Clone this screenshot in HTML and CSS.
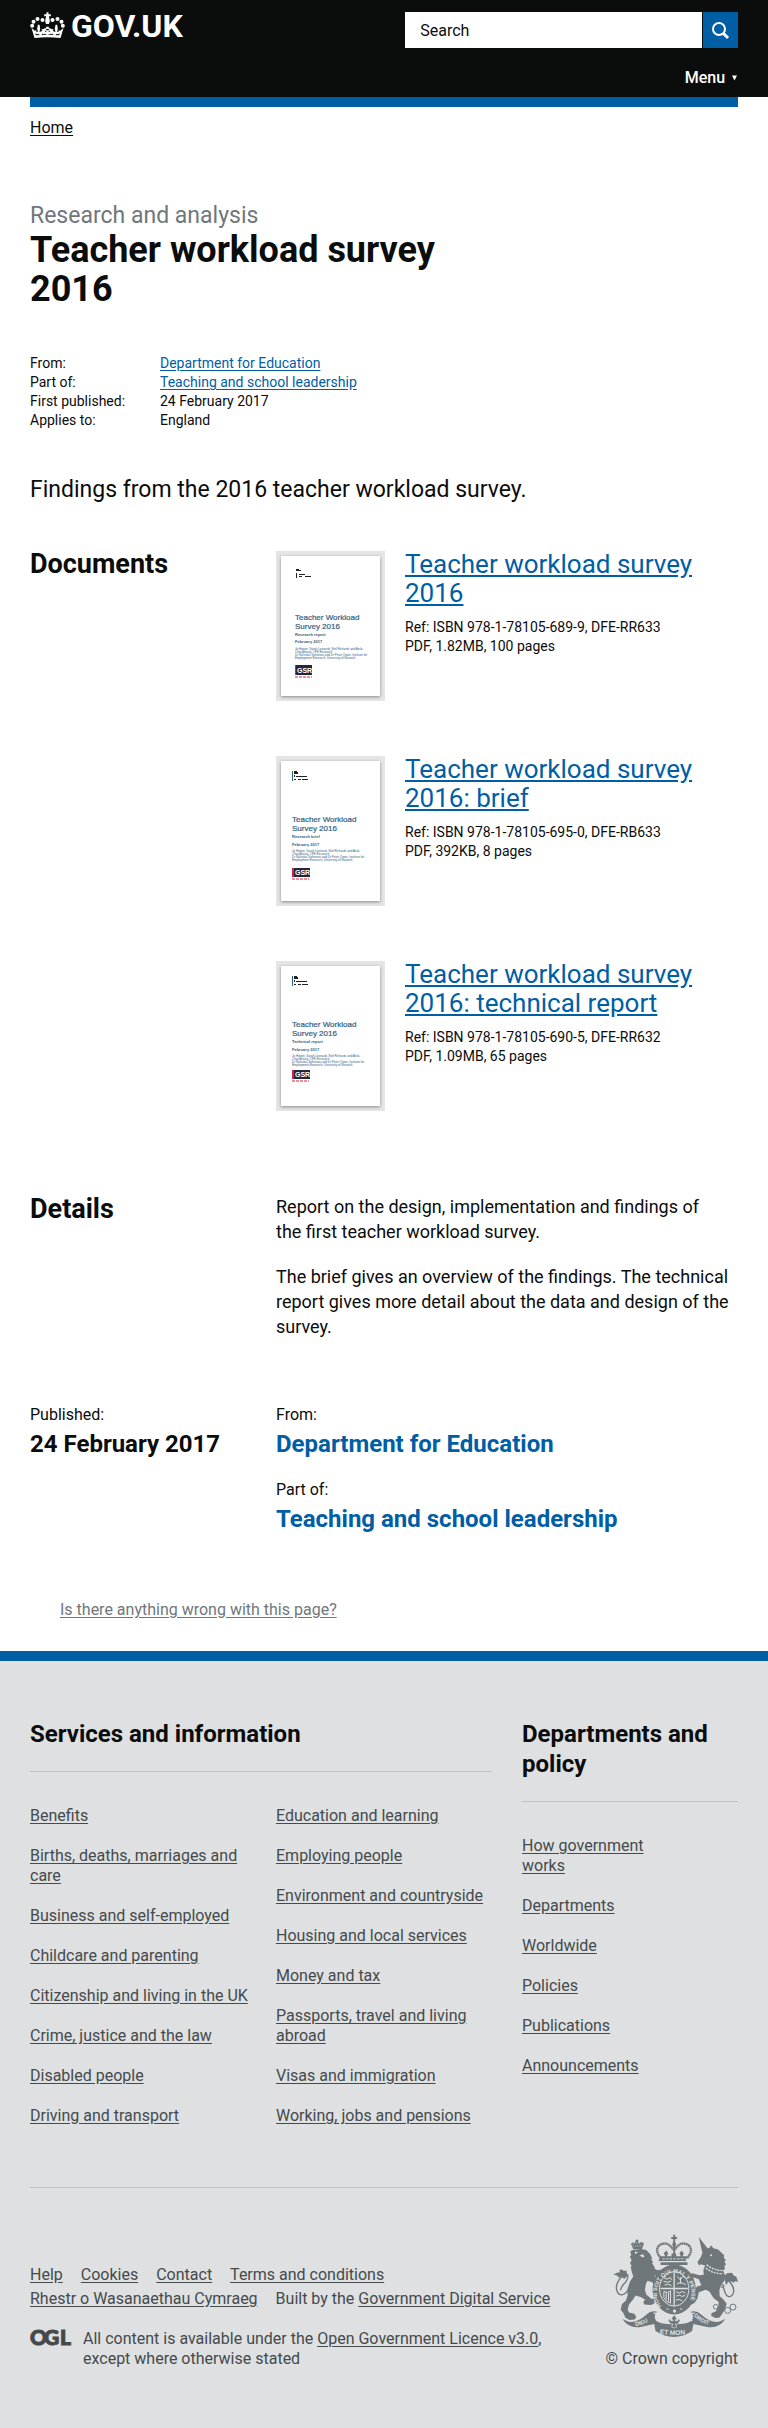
FILE: index.html
```html
<!DOCTYPE html>
<html lang="en">
<head>
<meta charset="utf-8">
<meta name="viewport" content="width=device-width, initial-scale=1">
<title>Teacher workload survey 2016 - GOV.UK</title>
<link rel="stylesheet" href="styles.css">
</head>
<body>
<header class="site-header">
  <div class="container header-inner">
    <a class="logo" href="#">
      <svg class="logo-crown" viewBox="92 36 104 78" fill="#fff" aria-hidden="true">
        <path d="M141 37h6v6h7v6h-6l2 8 1 8-3 7h-8l-3-7 1-8 2-8h-6v-6h7z"/>
        <circle cx="129" cy="60" r="6"/><circle cx="114" cy="57" r="6"/><circle cx="102" cy="65" r="6"/><circle cx="98" cy="77" r="6"/>
        <circle cx="159" cy="60" r="6"/><circle cx="174" cy="57" r="6"/><circle cx="186" cy="65" r="6"/><circle cx="190" cy="77" r="6"/>
        <path d="M96 84l10 8 4-1 1 5h4l-2-10 2-12h5l2 12-2 10 8-3-2-6 5 1 5-3h5l-2-5h10l-2 5h5l5 3 5-1-2 6 8 3-2-10 2-12h5l2 12-2 10h4l1-5 4 1 10-8-9 30q-39-5-78 0z"/>
        <path d="M107 100l5 3 6-1 4 3 6-4 6 2 5-6-4-5h6l-1-5h8l-1 5h6l-4 5 5 6 6-2 6 4 4-3 6 1 5-3-2 6q-37-4-70 0z" fill="#0b0c0c"/>
        <path d="M139 91h10l-2 5 5-1v8l-5-1 1 5h-8l1-5-5 1v-8l5 1zM121 96l8 3-3 7-7-1zM167 96l-8 3 3 7 7-1z"/>
      </svg>
      <span>GOV.UK</span>
    </a>
    <div class="header-tools">
      <form class="search" role="search">
        <input class="search-input" type="search" placeholder="Search" aria-label="Search">
        <button class="search-button" type="button" aria-label="Search">
          <svg viewBox="0 0 35 36" width="35" height="36" fill="none" stroke="#fff" aria-hidden="true"><circle cx="16" cy="17" r="6" stroke-width="2"/><path d="M20 21l5 5" stroke-width="3"/></svg>
        </button>
      </form>
      <button class="menu-button" type="button">Menu <svg class="menu-arrow" viewBox="0 0 6 6" aria-hidden="true"><path d="M0 0h6L3 6z" fill="#fff"/></svg></button>
    </div>
  </div>
</header>
<div class="container">
  <div class="brand-bar"></div>
  <nav class="breadcrumb" aria-label="Breadcrumb"><a href="#">Home</a></nav>
  <main>
    <div class="title-block">
      <p class="title-context">Research and analysis</p>
      <h1>Teacher workload survey 2016</h1>
    </div>
    <dl class="metadata">
      <dt>From:</dt><dd><a href="#">Department for Education</a></dd>
      <dt>Part of:</dt><dd><a href="#">Teaching and school leadership</a></dd>
      <dt>First published:</dt><dd>24 February 2017</dd>
      <dt>Applies to:</dt><dd>England</dd>
    </dl>
    <p class="summary">Findings from the 2016 teacher workload survey.</p>

    <section class="section">
      <h2 class="section-title">Documents</h2>
      <div class="section-body documents">
        <article class="document">
          <svg class="thumbnail" viewBox="0 0 99 140" role="img" aria-label="Report cover">
            <g fill="#222"><path d="M15 13h3v2h-3zM18 14h2v1h-2zM15 17h1v5h-1zM18 18h6v1h-6zM18 20h3v1h-3zM24 20h6v1h-6z"/></g>
            <g class="cover-text">
              <text class="cover-title" x="14" y="64">Teacher Workload</text><text class="cover-title" x="14" y="73">Survey 2016</text>
              <text class="cover-sub" x="14" y="80">Research report</text><text class="cover-sub" x="14" y="87">February 2017</text>
              <text x="14" y="94">Jo Higton, Sarah Leonardi, Neil Richards and Anila</text><text x="14" y="97">Choudhoury, CFE Research</text>
              <text x="14" y="100">Dr Nicholas Sofroniou and Dr Peter Owen, Institute for</text><text x="14" y="103">Employment Research, University of Warwick</text>
            </g>
            <rect x="14" y="109" width="17" height="10" fill="#26263b"/><rect x="14" y="109" width="1" height="10" fill="#d4213d"/>
            <text class="cover-logo" x="16" y="117">GSR</text><path d="M14 121h17" stroke="#d4213d" stroke-dasharray="3 1"/>
          </svg>
          <div>
            <h3><a href="#">Teacher workload survey 2016</a></h3>
            <p>Ref: ISBN 978-1-78105-689-9, DFE-RR633<br>PDF, 1.82MB, 100 pages</p>
          </div>
        </article>
        <article class="document">
          <svg class="thumbnail" viewBox="0 0 99 140" role="img" aria-label="Brief cover">
            <path d="M11 10h1v10h-1z" fill="#34638a"/><g fill="#222"><path d="M13 10h3v1h1v2h-4zM13 14h1v2h-1zM15 15h11v1H15zM13 18h2v1h-2zM17 18h3v1h-3zM21 18h6v1h-6z"/></g>
            <g class="cover-text">
              <text class="cover-title" x="11" y="61">Teacher Workload</text><text class="cover-title" x="11" y="70">Survey 2016</text>
              <text class="cover-sub" x="11" y="77">Research brief</text><text class="cover-sub" x="11" y="85">February 2017</text>
              <text x="11" y="91">Jo Higton, Sarah Leonardi, Neil Richards and Anila</text><text x="11" y="94">Choudhoury, CFE Research</text>
              <text x="11" y="97">Dr Nicholas Sofroniou and Dr Peter Owen, Institute for</text><text x="11" y="100">Employment Research, University of Warwick</text>
            </g>
            <rect x="11" y="107" width="18" height="9" fill="#26263b"/><rect x="11" y="107" width="2" height="9" fill="#d4213d"/>
            <text class="cover-logo" x="14" y="114">GSR</text><path d="M11 118h17" stroke="#d4213d" stroke-dasharray="3 1"/>
          </svg>
          <div>
            <h3><a href="#">Teacher workload survey 2016: brief</a></h3>
            <p>Ref: ISBN 978-1-78105-695-0, DFE-RB633<br>PDF, 392KB, 8 pages</p>
          </div>
        </article>
        <article class="document">
          <svg class="thumbnail" viewBox="0 0 99 140" role="img" aria-label="Technical report cover">
            <path d="M11 10h1v10h-1z" fill="#34638a"/><g fill="#222"><path d="M13 10h3v1h1v2h-4zM13 14h1v2h-1zM15 15h11v1H15zM13 18h2v1h-2zM17 18h3v1h-3zM21 18h6v1h-6z"/></g>
            <g class="cover-text">
              <text class="cover-title" x="11" y="61">Teacher Workload</text><text class="cover-title" x="11" y="70">Survey 2016</text>
              <text class="cover-sub" x="11" y="77">Technical report</text><text class="cover-sub" x="11" y="85">February 2017</text>
              <text x="11" y="91">Jo Higton, Sarah Leonardi, Neil Richards and Anila</text><text x="11" y="94">Choudhoury, CFE Research</text>
              <text x="11" y="97">Dr Nicholas Sofroniou and Dr Peter Owen, Institute for</text><text x="11" y="100">Employment Research, University of Warwick</text>
            </g>
            <rect x="11" y="104" width="18" height="9" fill="#26263b"/><rect x="11" y="104" width="2" height="9" fill="#d4213d"/>
            <text class="cover-logo" x="14" y="111">GSR</text><path d="M11 115h17" stroke="#d4213d" stroke-dasharray="3 1"/>
          </svg>
          <div>
            <h3><a href="#">Teacher workload survey 2016: technical report</a></h3>
            <p>Ref: ISBN 978-1-78105-690-5, DFE-RR632<br>PDF, 1.09MB, 65 pages</p>
          </div>
        </article>
      </div>
    </section>

    <section class="section details">
      <h2 class="section-title">Details</h2>
      <div class="section-body prose">
        <p>Report on the design, implementation and findings of the&nbsp;first teacher workload survey.</p>
        <p>The brief gives an overview of the findings. The technical report gives more detail about the data and design of the survey.</p>
      </div>
    </section>

    <section class="section published">
      <dl class="fact"><dt>Published:</dt><dd>24 February 2017</dd></dl>
      <dl class="fact section-body">
        <dt>From:</dt><dd><a href="#">Department for Education</a></dd>
        <dt>Part of:</dt><dd><a href="#">Teaching and school leadership</a></dd>
      </dl>
    </section>
    <p class="feedback"><a href="#">Is there anything wrong with this page?</a></p>
  </main>
</div>

<footer class="site-footer">
  <div class="container">
    <div class="footer-nav">
      <section class="services">
        <h2>Services and information</h2>
        <div class="services-lists">
          <ul>
            <li><a href="#">Benefits</a></li>
            <li><a href="#">Births, deaths, marriages and care</a></li>
            <li><a href="#">Business and self-employed</a></li>
            <li><a href="#">Childcare and parenting</a></li>
            <li class="one-line"><a href="#">Citizenship and living in the UK</a></li>
            <li><a href="#">Crime, justice and the law</a></li>
            <li><a href="#">Disabled people</a></li>
            <li><a href="#">Driving and transport</a></li>
          </ul>
          <ul>
            <li><a href="#">Education and learning</a></li>
            <li><a href="#">Employing people</a></li>
            <li><a href="#">Environment and countryside</a></li>
            <li><a href="#">Housing and local services</a></li>
            <li><a href="#">Money and tax</a></li>
            <li><a href="#">Passports, travel and living abroad</a></li>
            <li><a href="#">Visas and immigration</a></li>
            <li><a href="#">Working, jobs and pensions</a></li>
          </ul>
        </div>
      </section>
      <section>
        <h2>Departments and policy</h2>
        <ul class="policy-list">
          <li><a href="#">How government works</a></li>
          <li><a href="#">Departments</a></li>
          <li><a href="#">Worldwide</a></li>
          <li><a href="#">Policies</a></li>
          <li><a href="#">Publications</a></li>
          <li><a href="#">Announcements</a></li>
        </ul>
      </section>
    </div>
    <div class="footer-meta">
      <div>
        <ul class="meta-links">
          <li><a href="#">Help</a></li>
          <li><a href="#">Cookies</a></li>
          <li><a href="#">Contact</a></li>
          <li><a href="#">Terms and conditions</a></li>
          <li><a href="#">Rhestr o Wasanaethau Cymraeg</a></li>
          <li>Built by the <a href="#">Government Digital Service</a></li>
        </ul>
        <div class="licence">
          <svg class="ogl" viewBox="0 0 41 18" role="img" aria-label="Open Government Licence"><text x="0 14 30" y="16">OGL</text></svg>
          <p>All content is available under the <a href="#">Open Government Licence v3.0</a>, except where otherwise stated</p>
        </div>
      </div>
      <a class="copyright" href="#">
        <svg class="crest" viewBox="68 52 376 310" aria-hidden="true">
          <!-- lion -->
          <g fill="#6f777b">
            <path d="M122 82l5-6 5 4 5-9h5l4 9 7-5 8 5-6 18h-26zM137 69h7v6h-7z"/>
            <path d="M124 101l28-4 16 3 12 13 6 13-4 1 7 10-4 2 9 14-2 3 10 5 9-2-3 10 6 2-8 5 3 7-9-2-8-7 9 14-5 5 5 10-8 3-7-9-14-4-5 9-3 18 4 14 15 13 8 0 3 13-11 6-21-2-3-8 6-5-12-9-17-5-10 15-10 12-4 16 4 8 16 4 6 10-5 7-16 2-12-8-6-13-8-10 4-17 12-11 5-16-1-17 8-24 10-15-4-12-4-17 3-3-5-9 5-7-5-12 4-5-3-8z"/>
            <path d="M108 162l-8 1-5-4-8 1 2 7-9 2-11 5 13 4 1 5 8-2 12 6 8-9z"/>
          </g>
          <path d="M94 180q-20 23-15 40 4 19 20 14 14-7 22-29M112 173q3 17-13 31-6 8-9 17" fill="none" stroke="#6f777b" stroke-width="4"/>
          <path d="M148 116l10-3 5 7-6 3zM134 105l10 3-10 4z" fill="#dee0e2"/>
          <path d="M124 79h31M127 88h28" stroke="#dee0e2" stroke-width="2" stroke-dasharray="4 3"/>
          <!-- unicorn -->
          <g fill="#6f777b">
            <path d="M326 61l27 35 6-3 4-7 7 9 14 4 9 8 10 10-2 6 7 8-5 4 5 9-5 4 2 8-6 6 7 16-3 15-10 12-5 16 1 18 10 9 11 14-6 19-8 12-8 11-12 1-13-7 2-8 12-5 8-15 1-13-15-12-13-20-11-5-21 7-4 19-9 14-16 7-4-7 13-10 4-27 11-13 13-4-8-18-14-5-16 4-9-10-9 6-3-12 10-4 7 8 15-5 20 6 14-1-1-15 5-13-13-4-5 4-5-10 10-15 5-13z"/>
            <path d="M402 180l9-10 15-1 5 8 8 4 5 15-9-2-4 5-8-5-8 2-7 10z"/>
          </g>
          <path d="M416 177q-6 10 7 24 15 21 3 36-13 9-20-7l-8-24" fill="none" stroke="#6f777b" stroke-width="4"/>
          <path d="M350 145q22 17 48 17M347 155q26 18 52 16" fill="none" stroke="#dee0e2" stroke-width="4" stroke-dasharray="6 3"/>
          <circle cx="363" cy="116" r="3" fill="#dee0e2"/>
          <g fill="none" stroke="#6f777b" stroke-width="3"><circle cx="377" cy="271" r="7"/><circle cx="390" cy="287" r="6"/><circle cx="413" cy="282" r="9"/><circle cx="429" cy="272" r="9"/><circle cx="397" cy="208" r="5"/><circle cx="396" cy="270" r="8"/></g>
          <!-- crown -->
          <path d="M212 125q-23-28 0-42 22-9 37 16M291 125q23-28 0-42-22-9-37 16" fill="none" stroke="#6f777b" stroke-width="7" stroke-dasharray="5 1"/>
          <path d="M249 54h6v7h6v6h-6v9l3 7-3 9v27h-6V92l-3-9 3-7v-9h-6v-6h6zM211 119h14l-4-9 7-8 6 8-4 9h14v-8h14v8h14l-4-9 6-8 7 8-4 9h14l-4 14h-82zM211 137h81v8h-81z" fill="#6f777b"/>
          <path d="M217 127h69" stroke="#dee0e2" stroke-width="3" stroke-dasharray="7 4"/>
          <!-- garter and shield -->
          <ellipse cx="252" cy="219" rx="65" ry="75" fill="#6f777b"/>
          <ellipse cx="252" cy="217" rx="44" ry="52" fill="#6f777b" stroke="#dee0e2" stroke-width="3"/>
          <path id="garter" d="M213 269A52 60 0 1 1 291 269" fill="none"/>
          <text class="crest-text"><textPath href="#garter">HONI SOIT QUI MAL Y PENSE</textPath></text>
          <path d="M252 168v100M211 216h82" stroke="#dee0e2" stroke-width="4"/>
          <path d="M221 184l10 4 9-5 5 7M220 195l12 2 11-3M223 206l9-3 12 4M258 226l9 4 10-5 9 5M258 239l11-3 6 4 10-3M257 251l10-2 9 4M262 180l8 10 9-11 8 6M260 202l11-4 16 6M271 182v20M221 225v18q5 14 20 17V223q-7 9-20 2M228 228v21M235 228v27" fill="none" stroke="#dee0e2" stroke-width="3"/>
          <path d="M229 278h6M249 284l4-5 4 5-4 5zM270 278h6" stroke="#dee0e2" stroke-width="3" fill="#dee0e2"/>
          <!-- motto ribbon -->
          <path d="M108 313q25 13 61-19 13-13 32-8-12 11-5 24 9 14 55 14t55-14q7-13-5-24 19-5 32 8 36 32 61 19l12-5q-21 31-58 23l-38-8-4 21q-27 18-55 18t-55-18l-4-21-38 8q-37 8-58-23z" fill="#6f777b"/>
          <path d="M190 290q20 0 23 12 2 12-16 10M314 290q-20 0-23 12-2 12 16 10" fill="none" stroke="#dee0e2" stroke-width="4"/>
          <path d="M252 295l8 11-5 7h7l3-7 5 7-7 10h-8l5 9-8 3-8-3 5-9h-8l-7-10 5-7 3 7h7l-5-7z" fill="#6f777b" stroke="#dee0e2" stroke-width="2"/>
          <path id="motto-left" d="M136 329q29-3 58-29" fill="none"/><path id="motto-mid" d="M208 352q44 8 92 0" fill="none"/><path id="motto-right" d="M310 299q27 26 62 30" fill="none"/>
          <text class="crest-text"><textPath href="#motto-left">DIEU</textPath></text>
          <text class="crest-text crest-motto"><textPath href="#motto-mid">ET MON</textPath></text>
          <text class="crest-text"><textPath href="#motto-right">DROIT</textPath></text>
        </svg>
        <span>© Crown copyright</span>
      </a>
    </div>
  </div>
</footer>
</body>
</html>
```

FILE: styles.css
```css
* { box-sizing: border-box; }
body {
  margin: 0;
  background: #fff;
  color: #0b0c0c;
  font: 16px/20px Roboto, "Liberation Sans", sans-serif;
}
h1, h2, h3, p, dl, dd, ul { margin: 0; padding: 0; }
ul { list-style: none; }
a { color: #005ea5; text-underline-offset: 2px; }
.container { max-width: 1020px; margin: 0 auto; padding: 0 30px; }

.site-header { background: #0b0c0c; }
.header-inner { display: flex; justify-content: space-between; padding-top: 12px; padding-bottom: 9px; }
.logo {
  display: flex;
  align-items: flex-start;
  gap: 6px;
  color: #fff;
  font-size: 32px;
  line-height: 28px;
  font-weight: 700;
  text-decoration: none;
}
.logo-crown { width: 35px; height: 26px; }
.header-tools { display: flex; flex-direction: column; align-items: flex-end; gap: 20px; width: 47%; }
.search { display: flex; gap: 1px; width: 100%; }
.search-input {
  flex: 1;
  min-width: 0;
  height: 36px;
  padding: 0 15px;
  border: 0;
  border-radius: 0;
  background: #fff;
  color: #0b0c0c;
  font: inherit;
  appearance: none;
}
.search-input::placeholder { color: #0b0c0c; opacity: 1; }
.search-button { width: 35px; height: 36px; padding: 0; border: 0; background: #005ea5; }
.search-button svg { display: block; }
.menu-button {
  padding: 0 1px;
  border: 0;
  background: none;
  color: #fff;
  font: 500 16px/20px Roboto, sans-serif;
}
.menu-arrow { width: 5px; height: 6px; margin-left: 3px; vertical-align: 2px; }

.brand-bar { height: 10px; background: #005ea5; }
.breadcrumb { padding-top: 11px; }
.breadcrumb a { color: #0b0c0c; }
.title-block { max-width: 462px; margin-top: 62px; }
.title-context { color: #6f777b; font-size: 23px; line-height: 31px; }
h1 { font-size: 36px; line-height: 39px; }
.metadata {
  display: grid;
  grid-template-columns: 130px 1fr;
  margin-top: 45px;
  font-size: 14px;
  line-height: 19px;
}
.summary { margin-top: 45px; font-size: 23px; line-height: 30px; }

.section { display: grid; grid-template-columns: repeat(3, 1fr); column-gap: 30px; margin-top: 43px; }
.section-title { font-size: 27px; line-height: 32px; }
.section-body { grid-column: 2 / 4; }
.documents { display: flex; flex-direction: column; gap: 52px; }
.document { display: flex; gap: 20px; align-items: flex-start; }
.thumbnail {
  flex: none;
  width: 99px;
  height: 140px;
  margin: 8px 5px 5px;
  background: #fff;
  box-shadow: 0 1px 3px #888, 0 0 0 5px #e5e5e5;
}
.document h3 { margin-top: 2px; font-size: 26px; line-height: 29px; font-weight: 400; }
.document p { margin-top: 10px; font-size: 14px; line-height: 19px; }
.cover-text { fill: #31617f; font: 3px "Liberation Sans", sans-serif; }
.cover-title { font-size: 8px; stroke: #31617f; stroke-width: 0.2px; }
.cover-sub { font-size: 4px; font-weight: 700; }
.cover-logo { fill: #fff; font: 700 7px "Liberation Sans", sans-serif; }

.details { margin-top: 82px; }
.prose { display: flex; flex-direction: column; gap: 20px; padding-top: 1px; font-size: 18px; line-height: 25px; }
.published { margin-top: 66px; }
.fact dd { margin: 4px 0 21px; font-size: 24px; line-height: 30px; font-weight: 700; }
.fact dd:last-child { margin-bottom: 0; }
.fact a { text-decoration: none; }
.feedback { padding: 66px 30px 31px; }
.feedback a { color: #6f777b; }

.site-footer { border-top: 10px solid #005ea5; background: #dee0e2; color: #454a4c; padding: 58px 0 60px; }
.site-footer a { color: #454a4c; }
.footer-nav { display: grid; grid-template-columns: repeat(3, 1fr); column-gap: 30px; }
.services { grid-column: 1 / 3; }
.footer-nav h2 {
  padding-bottom: 22px;
  margin-bottom: 34px;
  border-bottom: 1px solid #bfc1c3;
  color: #0b0c0c;
  font-size: 24px;
  line-height: 30px;
}
.services-lists { display: grid; grid-template-columns: repeat(2, minmax(0, 1fr)); column-gap: 30px; }
.footer-nav ul { display: flex; flex-direction: column; gap: 20px; }
.one-line { white-space: nowrap; }
.policy-list { max-width: 65%; }
.footer-meta {
  display: flex;
  justify-content: space-between;
  align-items: flex-end;
  margin-top: 61px;
  padding-top: 46px;
  border-top: 1px solid #bfc1c3;
}
.meta-links { display: flex; flex-wrap: wrap; column-gap: 18px; line-height: 24px; max-width: 540px; }
.licence { display: flex; gap: 12px; margin-top: 18px; max-width: 540px; }
.ogl { flex: none; width: 41px; height: 18px; overflow: visible; fill: #454a4c; stroke: #454a4c; font: 900 21px Lato, sans-serif; }
.site-footer .copyright { display: flex; flex-direction: column; align-items: flex-end; gap: 12px; text-decoration: none; white-space: nowrap; }
.crest { width: 125px; height: 103px; }
.crest-text { fill: #dee0e2; font: 700 17px "Liberation Sans", sans-serif; }
.crest-motto { font-size: 20px; }
```
